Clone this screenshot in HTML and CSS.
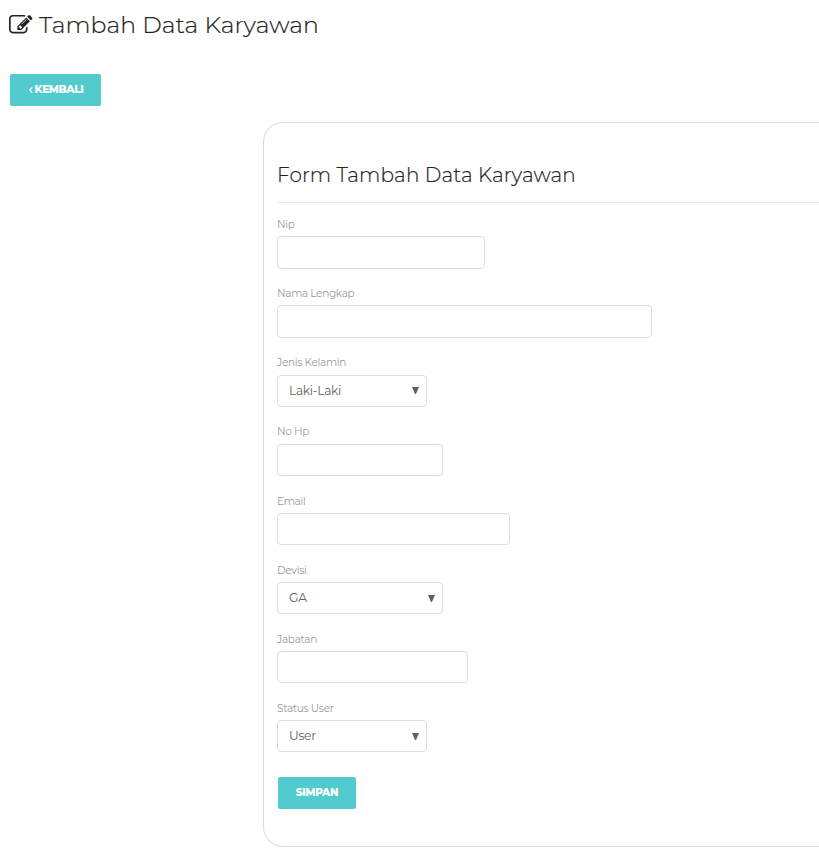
FILE: index.html
```html
<!DOCTYPE html>
<html lang="id">
<head>
<meta charset="utf-8">
<title>Tambah Data Karyawan</title>
<link rel="stylesheet" href="styles.css">
</head>
<body>
<header class="page-header">
  <svg class="edit-icon" viewBox="0 0 1792 1792" aria-hidden="true"><path d="M888 1184l116-116-152-152-116 116v56h96v96h56zm440-720q-16-16-33 1l-350 350q-17 17-1 33t33-1l350-350q17-17 1-33zm80 594v190q0 119-84.5 203.5t-203.5 84.5h-832q-119 0-203.5-84.500t-84.500-203.500v-832q0-119 84.500-203.500t203.500-84.500h832q63 0 117 25 15 7 18 23 3 17-9 29l-49 49q-14 14-32 8-23-6-45-6h-832q-66 0-113 47t-47 113v832q0 66 47 113t113 47h832q66 0 113-47t47-113v-126q0-13 9-22l64-64q15-15 35-7t20 29zm-96-738l288 288-672 672h-288v-288zm444 132l-92 92-288-288 92-92q28-28 68-28t68 28l152 152q28 28 28 68t-28 68z"/></svg>
  <h1 class="page-title">Tambah Data Karyawan</h1>
</header>
<a class="button button-back" href="#"><svg class="chevron" viewBox="0 0 4 6" aria-hidden="true"><path d="M3.4 .4L.8 3l2.600 2.600"/></svg><span>KEMBALI</span></a>
<main class="panel">
  <h2 class="form-title">Form Tambah Data Karyawan</h2>
  <form>
    <div class="field"><label for="nip">Nip</label><input class="control w-nip" id="nip"></div>
    <div class="field"><label for="nama">Nama Lengkap</label><input class="control w-nama" id="nama"></div>
    <div class="field"><label>Jenis Kelamin</label><div class="control select w-small"><span>Laki-Laki</span><svg class="arrow" viewBox="0 0 7 7"><path d="M0 0h7L4 7H3z"/></svg></div></div>
    <div class="field"><label for="hp">No Hp</label><input class="control w-medium" id="hp"></div>
    <div class="field"><label for="email">Email</label><input class="control w-email" id="email"></div>
    <div class="field"><label>Devisi</label><div class="control select w-medium"><span>GA</span><svg class="arrow" viewBox="0 0 7 7"><path d="M0 0h7L4 7H3z"/></svg></div></div>
    <div class="field"><label for="jabatan">Jabatan</label><input class="control w-jabatan" id="jabatan"></div>
    <div class="field"><label>Status User</label><div class="control select w-small"><span>User</span><svg class="arrow" viewBox="0 0 7 7"><path d="M0 0h7L4 7H3z"/></svg></div></div>
    <button class="button button-save" type="button">SIMPAN</button>
  </form>
</main>
</body>
</html>
```
FILE: styles.css
```css
* { box-sizing: border-box; }
body {
  margin: 0;
  height: 855px;
  overflow: hidden;
  background: #fff;
  color: #252422;
  font-family: Montserrat, Inter, sans-serif;
}
h1, h2 { margin: 0; font-weight: 300; white-space: nowrap; }
.page-header {
  display: flex;
  align-items: center;
  height: 50px;
  padding-left: 9px;
}
.edit-icon { width: 23.5px; height: 24px; margin: 0 6.500px 0 0; fill: #252422; }
.page-title { font-size: 23.5px; line-height: 30px; letter-spacing: 0.09px; -webkit-text-stroke: 0.2px #252422; }
.button {
  display: flex;
  align-items: center;
  justify-content: center;
  height: 32px;
  border: 0;
  border-radius: 2px;
  background: #51cbce;
  color: #fff;
  font-family: inherit;
  font-size: 10.5px;
  font-weight: 800;
  letter-spacing: -0.35px;
  text-decoration: none;
  padding: 0 0 1px;
}
.button-back { width: 91px; margin: 24px 0 0 10px; padding-left: 1px; gap: 2px; }
.chevron { width: 4px; height: 6px; margin-top: 1px; fill: none; stroke: #fff; stroke-width: 1.2; }
.panel {
  height: 725px;
  margin: 16px 0 0 263px;
  padding: 35px 0 0 13px;
  border: 1px solid #ddd;
  border-right: 0;
  border-radius: 20px 0 0 20px;
}
.form-title {
  height: 45px;
  border-bottom: 1px solid #e9e9e9;
  font-size: 20px;
  line-height: 34px;
  letter-spacing: 0.14px;
  -webkit-text-stroke: 0.2px #252422;
}
form { padding-top: 12.35px; }
.field { height: 69.14px; }
.field label {
  display: block;
  width: max-content;
  height: 21px;
  padding-top: 0.72px;
  color: #9a9a9a;
  font-size: 10.5px;
  line-height: 18px;
  letter-spacing: -0.3px;
}
.control {
  display: block;
  height: 32.15px;
  border: 1px solid #ddd;
  border-radius: 4px;
  background: #fff;
  outline: 0;
}
.select {
  display: flex;
  align-items: center;
  justify-content: space-between;
  padding: 0 7px 0.7px 11px;
  color: #66615b;
  font-size: 12.25px;
  letter-spacing: -0.3px;
}
.arrow { width: 7px; height: 7px; margin-top: 1px; fill: #66615b; }
.w-nip { width: 208px; height: 33px; }
.w-nama { width: 375px; }
.w-small { width: 150px; }
.w-medium { width: 166px; }
.w-email { width: 233px; }
.w-jabatan { width: 191px; }
.button-save { width: 78px; margin: 8.500px 0 0 1px; padding: 0; }
```
